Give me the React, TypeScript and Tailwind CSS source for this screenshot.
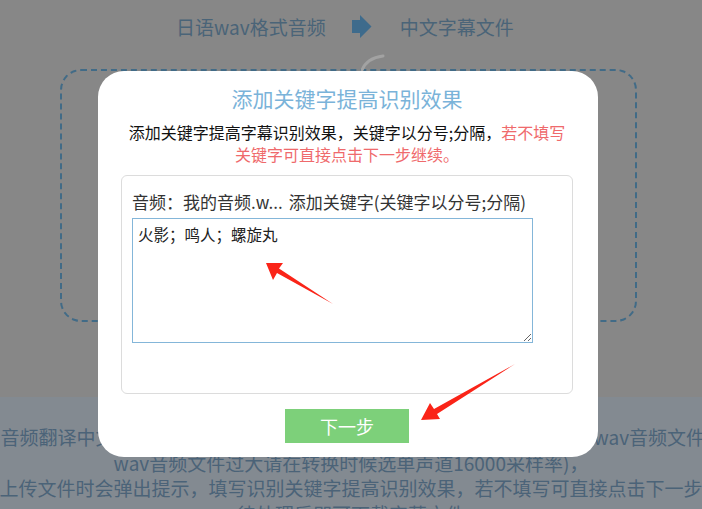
const font = { fontFamily: '"Noto Sans CJK SC", "Liberation Sans", sans-serif' };

function ArrowRight() {
  return (
    <svg width="20" height="24" viewBox="0 0 20 24">
      <polygon points="0,5 8,5 8,0 19.5,11.5 8,23 8,18 0,18" fill="#3e6b8c" />
    </svg>
  );
}

function Modal() {
  return (
    <div className="absolute left-[98px] top-[71px] flex h-[386px] w-[500px] flex-col rounded-[26px] bg-white pl-[23px] pr-[25px] pt-[14px]">
      <h2 className="text-center text-[21px] leading-[26px] text-[#7ab3d9]">添加关键字提高识别效果</h2>
      <p className="mt-[10px] text-center text-[16px] leading-[22px] text-[#111]">
        添加关键字提高字幕识别效果，关键字以分号;分隔，<span className="text-[#ef6a6c]">若不填写</span>
        <br />
        <span className="text-[#ef6a6c]">关键字可直接点击下一步继续。</span>
      </p>
      <div className="mt-[10px] h-[219px] w-[452px] rounded-[6px] border border-[#dcdcdc] pl-[10px] pt-[14px]">
        <div className="whitespace-nowrap text-[17px] leading-[24px] text-[#333]">
          音频：我的音频.w...<span className="ml-[6px]">添加关键字(关键字以分号;分隔)</span>
        </div>
        <textarea
          className="mt-[4px] block h-[125px] w-[401px] border border-[#84b6d9] px-[5px] py-[5px] text-[15.5px] leading-[20px] text-[#222] outline-none"
          style={font}
          defaultValue="火影；鸣人；螺旋丸"
        />
      </div>
      <button className="mx-auto mt-[15px] h-[34px] w-[124px] bg-[#7dd07a] text-[18px] text-white">下一步</button>
    </div>
  );
}

export default function App() {
  return (
    <div className="relative h-[509px] w-full overflow-hidden bg-[#878787]" style={font}>
      <div className="flex h-[397px] flex-col">
        <div className="flex items-center pl-[176px] pt-[14px] text-[19px] leading-[26px] text-[#4a6478]">
          <span>日语wav格式音频</span>
          <span className="ml-[26px] mr-[28px]">
            <ArrowRight />
          </span>
          <span>中文字幕文件</span>
        </div>
        <div className="ml-[60px] mt-[29px] h-[253px] w-[577px] rounded-[21px] border-2 border-dashed border-[#416b87]" />
      </div>
      <svg className="absolute left-[360px] top-[53px]" width="26" height="20" viewBox="0 0 26 20">
        <path d="M2 17 Q7 5 23 3" fill="none" stroke="#a2a2a2" strokeWidth="3" strokeLinecap="round" />
      </svg>
      <div className="flex flex-col items-center bg-[#838a91] pt-[27px] text-[19px] leading-[25.5px] text-[#4b6378]">
        <div className="whitespace-nowrap pl-[10px]">音频翻译中文字幕：支持上传日语mp3格式音频文件，上传mp4视频或wav音频文件(</div>
        <div className="whitespace-nowrap">wav音频文件过大请在转换时候选单声道16000采样率)，</div>
        <div className="whitespace-nowrap">上传文件时会弹出提示，填写识别关键字提高识别效果，若不填写可直接点击下一步</div>
        <div className="whitespace-nowrap">待处理后即可下载字幕文件</div>
      </div>
      <Modal />
      <svg className="pointer-events-none absolute left-0 top-0" width="702" height="509">
        <polygon points="266,263 283,263 279,268.5 333,304 277,273 273,280" fill="#fa2418" />
        <polygon points="421,420 430,403 434,409 515,364 437,414 440,419" fill="#fa2418" />
      </svg>
    </div>
  );
}
